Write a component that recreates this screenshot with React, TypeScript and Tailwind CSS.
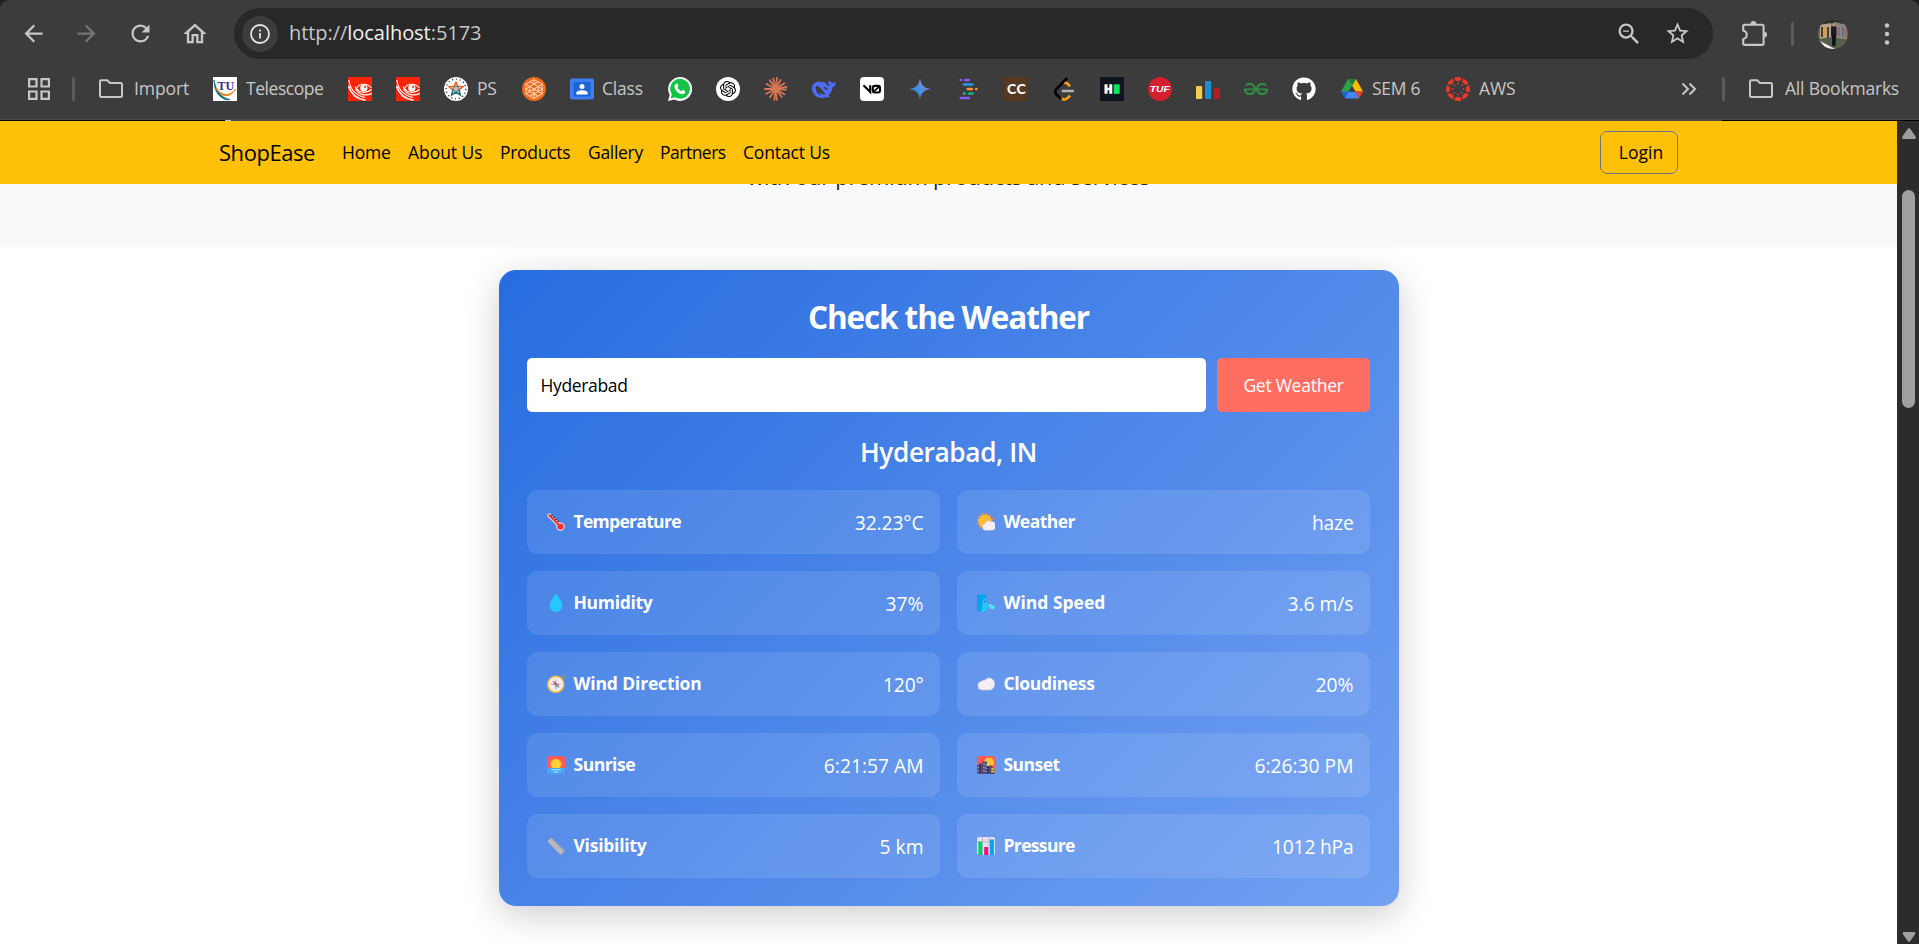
import type { ReactNode } from "react";
import { SiOpenai, SiGeeksforgeeks } from "react-icons/si";
import { FaGithub } from "react-icons/fa";
import {
  MdArrowBack,
  MdArrowForward,
  MdRefresh,
  MdOutlineHome,
  MdZoomOut,
  MdStarBorder,
} from "react-icons/md";

/* ---------- bookmark icons (24 x 24) ---------- */

function Svg({ children, box = 24 }: { children: ReactNode; box?: number }) {
  return (
    <svg viewBox={`0 0 ${box} ${box}`} className="size-6 shrink-0">
      {children}
    </svg>
  );
}

const TelescopeIcon = () => (
  <Svg>
    <rect width="24" height="24" fill="#fff" />
    <path d="M1 3 C1 14 6 21 14 23 L17 22.5 C8 21 3 14 1 3Z" fill="#0e6f86" stroke="#0e6f86" strokeWidth="0.8" />
    <path d="M3 11 C7 20 17 22 22.5 12 C18 19 9 20 3 11Z" fill="#f08020" stroke="#f08020" strokeWidth="1" />
    <text x="12.8" y="13" textAnchor="middle" className="font-['Liberation_Serif',serif]" fontSize="12" fontWeight="700" fill="#3a2f86">
      TU
    </text>
  </Svg>
);

const EyeIcon = () => (
  <Svg>
    <rect width="24" height="24" fill="#fb2406" />
    <g fill="none" stroke="#fff">
      <path d="M0.8 3 C2 12 8 18.5 17 20.5" strokeWidth="1.1" />
      <path d="M0.5 9 C3 17 9 22 17.5 23.2" strokeWidth="1.5" />
      <path d="M7.5 9.5 C8 15.5 14 20.5 24 16.5" strokeWidth="1.3" />
      <path d="M8.5 11.5 C11 6.5 18.5 5.5 23.5 11" strokeWidth="1.1" />
      <path d="M8.5 11.5 C12 16.5 19 16.5 23.5 12.5" strokeWidth="1.1" />
    </g>
    <circle cx="15.8" cy="11" r="3.6" fill="#fff" />
    <circle cx="17" cy="9.8" r="1.1" fill="#fb2406" />
  </Svg>
);

const StarSealIcon = () => (
  <Svg>
    <circle cx="12" cy="12" r="12" fill="#fff" />
    <circle cx="12" cy="12" r="9.9" fill="none" stroke="#333" strokeWidth="1.4" strokeDasharray="1.1 2.75" />
    <path d="M12 4.8 L13.7 9.3 L18.8 9.6 L15 12.8" fill="none" stroke="#e8632a" strokeWidth="1.6" />
    <path d="M12 4.8 L10.3 9.3 L5.2 9.6 L9 12.8" fill="none" stroke="#e8632a" strokeWidth="1.6" />
    <path d="M9 12.8 L7.7 18 L12 15.2 L16.3 18 L15 12.8" fill="none" stroke="#1c6f7d" strokeWidth="1.6" />
    <circle cx="12" cy="11.8" r="2.8" fill="#b9bec0" stroke="#5c6468" strokeWidth="0.9" />
  </Svg>
);

const HexIcon = () => (
  <Svg>
    <circle cx="12" cy="12" r="12" fill="#f26a1b" />
    <g fill="none" stroke="#ffe3cf" strokeWidth="0.9">
      <path d="M12 2.5 L20.2 7.25 V16.75 L12 21.5 L3.8 16.75 V7.25Z" />
      <path d="M12 7 L16.3 9.5 V14.5 L12 17 L7.7 14.5 V9.5Z" />
      <path d="M12 2.5 V7 M12 17 V21.5 M3.8 7.25 L7.7 9.5 L12 12 L16.3 14.5 L20.2 16.75 M20.2 7.25 L16.3 9.5 L12 12 L7.7 14.5 L3.8 16.75 M12 12 V17" />
      <path d="M7.9 4.9 L12 7 L16.1 4.9 M3.8 12 L7.7 9.5 M3.8 12 L7.7 14.5 M20.2 12 L16.3 9.5 M20.2 12 L16.3 14.5 M7.9 19.1 L12 17 L16.1 19.1" />
    </g>
  </Svg>
);

const ClassIcon = () => (
  <Svg>
    <rect y="1.5" width="24" height="21" rx="1.8" fill="#3f7df0" />
    <rect x="3.5" y="5" width="17" height="14.5" fill="#1a66d6" />
    <circle cx="12" cy="9.4" r="2.5" fill="#fff" />
    <path d="M6.3 17.5 V16.2 C6.3 13.9 9.5 13.2 12 13.2 S17.7 13.9 17.7 16.2 V17.5Z" fill="#fff" />
  </Svg>
);

const WhatsAppIcon = () => (
  <Svg>
    <path d="M0 24 L1.7 17.9 A12 12 0 1 1 6.2 22.4Z" fill="#fff" />
    <path d="M2.6 21.4 L3.8 17.2 A9.9 9.9 0 1 1 7.1 20.3Z" fill="#12c443" />
    <path d="M8.2 6.6 C8.7 6.3 9.3 6.4 9.5 6.9 L10.3 8.8 C10.5 9.3 9.4 10.3 9.5 10.6 C10.3 12.2 11.5 13.4 13.3 14.2 C13.7 14.3 14.5 13 14.9 13 L17.1 14 C17.6 14.3 17.3 15.6 16.7 16.3 C15.3 17.6 13.4 17.4 11.4 16.4 C9.3 15.3 7.4 13.2 6.7 11.2 C6.1 9.4 6.7 7.6 8.2 6.6Z" fill="#fff" />
  </Svg>
);

const OpenAiIcon = () => (
  <div className="flex size-6 shrink-0 items-center justify-center rounded-full bg-white text-black">
    <SiOpenai className="size-4" />
  </div>
);

const RAYS = [
  [22, 12.6], [20.6, 17.4], [17.8, 20], [12.9, 23], [10.4, 22.8], [6, 20.2], [2.2, 16.8],
  [0.8, 12], [2.6, 7], [5.8, 3.3], [9.3, 1.5], [13, 0.9], [16.6, 3], [20.3, 6.2], [22.6, 9.8],
];

const BurstIcon = () => (
  <Svg>
    <g stroke="#d97757" strokeWidth="1.8" strokeLinecap="round">
      {RAYS.map(([x, y]) => (
        <path key={`${x}-${y}`} d={`M11.5 12 L${x} ${y}`} />
      ))}
    </g>
  </Svg>
);

const WhaleIcon = () => (
  <Svg>
    <path
      d="M23.9 5.2 C22.6 5.7 21.6 5 20.7 5.9 C19 5.6 17.6 4.7 16.9 3.5 C15.6 5.2 16 7.3 17.7 8.8 C16.9 9.5 16.2 9.2 15.3 8.3 C13.5 6.7 12.3 4.6 10.8 4.3 C10.7 5 10.9 5.5 11.2 5.9 C6.5 3.3 0 5.2 0 11.5 C0 16.7 4.5 21 9.5 21 C11.5 21 13 20.5 14.2 19.7 C15.4 20.5 16.7 20.6 17.8 20 L16.3 18.2 C19.2 15.6 20.3 13 20.5 10.3 C22.4 9.7 23.7 8 23.9 5.2Z"
      fill="#4d6bfe"
    />
    <path d="M3.8 8.8 C6.8 9 9.5 11.5 12.8 16.5 C13.4 17.3 13.2 18 12.3 17.8 C10.3 17.3 9.8 16.3 8.5 15.3 C8 16.3 8.7 17.3 9.5 18.4 C5.3 17.5 3.3 13.5 3.8 8.8Z" fill="#3c3c3c" />
    <path d="M11.3 10 C13.2 9.3 15.5 10.8 15.6 13.4 C14.5 13.6 12.6 11.7 11.3 10Z" fill="#3c3c3c" />
  </Svg>
);

const VZeroIcon = () => (
  <Svg>
    <rect width="24" height="24" rx="4" fill="#fff" />
    <g fill="none" stroke="#000" strokeWidth="2.1">
      <path d="M3.5 8.2 L10.2 15 V8.2" />
      <rect x="12.8" y="8.9" width="7.2" height="6.6" rx="2" />
      <path d="M13.3 15.2 L19.8 8.9" strokeWidth="1.7" />
    </g>
  </Svg>
);

const SparkIcon = () => (
  <Svg>
    <defs>
      <linearGradient id="spark" x1="0" y1="1" x2="1" y2="0">
        <stop offset="0.2" stopColor="#2f86dc" />
        <stop offset="0.5" stopColor="#4a8ee0" />
        <stop offset="0.9" stopColor="#a884cf" />
      </linearGradient>
    </defs>
    <path d="M12 1 C12.8 8 16 11.2 23 12 C16 12.8 12.8 16 12 23 C11.2 16 8 12.8 1 12 C8 11.2 11.2 8 12 1Z" fill="url(#spark)" />
  </Svg>
);

const DashesIcon = () => (
  <Svg>
    <g strokeWidth="2.7" strokeLinecap="round">
      <path d="M4.8 3 H4.9 M9.2 3 H12.8" stroke="#8b5cf6" />
      <path d="M8 7.5 H16.4" stroke="#1e9bf0" />
      <path d="M11.8 12 H15.8 M20.3 12 H20.4" stroke="#f79a2e" />
      <path d="M8 16.5 H8.6 M13.2 16.5 H16.4" stroke="#10b981" />
      <path d="M4.8 21 H12.8" stroke="#8b5cf6" />
    </g>
  </Svg>
);

const CodeChefIcon = () => (
  <div className="flex size-6 shrink-0 items-center justify-center bg-[#573921] pl-px font-['Lato',sans-serif] text-[14px] leading-none font-black tracking-[0.5px] text-white">
    CC
  </div>
);

const LeetIcon = () => (
  <Svg>
    <g fill="none" strokeWidth="2.7" strokeLinecap="round">
      <path d="M11 6.2 C13.2 4.8 14.7 5.5 18 9.3" stroke="#f7a11b" strokeLinecap="butt" />
      <path d="M18 18.5 C14.5 23.5 11.5 23.5 8 20.5" stroke="#f7a11b" strokeLinecap="butt" />
      <path d="M14.5 1.6 L4 12.5 C2.9 14 3.2 16 4.7 17.8 L8.5 21.5" stroke="#000" />
      <path d="M10.8 14 H20.8" stroke="#b3b3b3" strokeWidth="2.5" />
    </g>
  </Svg>
);

const HackerIcon = () => (
  <Svg>
    <rect width="24" height="24" fill="#0e141e" />
    <path d="M4.5 7.3 H7.5 V10.7 H9.3 V7.3 H12.3 V16.7 H9.3 V13.3 H7.5 V16.7 H4.5Z" fill="#fff" />
    <rect x="13.7" y="7.3" width="6" height="9.6" fill="#05e85a" />
  </Svg>
);

const TufIcon = () => (
  <div className="flex size-6 shrink-0 items-center justify-center rounded-full bg-[#d41f2f]">
    <span className="scale-x-115 font-['Liberation_Sans',sans-serif] text-[9px] leading-none font-bold text-white italic">TUF</span>
  </div>
);

const BarsIcon = () => (
  <Svg>
    <rect x="0" y="9" width="6.2" height="13" rx="1" fill="#f4cb4f" />
    <rect x="9" y="4" width="6.2" height="18" rx="1" fill="#1f8ed0" />
    <rect x="17.8" y="11" width="6.2" height="11" rx="1" fill="#b41d23" />
  </Svg>
);

const DriveIcon = () => (
  <Svg>
    <path d="M8 2 H16 L12 9 L5 20.5 L1 14.5Z" fill="#2ba24c" />
    <path d="M8 2 H16 L23 14.5 H15.3Z" fill="#ffba00" />
    <path d="M8 2 H16 L12 8.9Z" fill="#188038" />
    <path d="M1 14.5 H8.7 L5 21.5Z" fill="#1967d2" />
    <path d="M5 21.5 L8.7 14.5 H15.3 L19 21.5Z" fill="#4285f4" />
    <path d="M15.3 14.5 H23 L19 21.5Z" fill="#ea4335" />
    <path d="M12 8.9 L8.7 14.5 H15.3Z" fill="#3c3c3c" />
  </Svg>
);

const CanvasIcon = () => (
  <Svg>
    {[0, 45, 90, 135, 180, 225, 270, 315].map((a) => (
      <g key={a} transform={`rotate(${a} 12 12)`} fill="#e63a2b">
        <path d="M8.4 0.6 A12 12 0 0 1 15.6 0.6 A3.6 3.6 0 0 1 8.4 0.6Z" />
        <circle cx="12" cy="6.5" r="0.9" />
      </g>
    ))}
  </Svg>
);

const FolderIcon = () => (
  <svg viewBox="0 0 24 20" className="mr-[3px] h-5 w-6 shrink-0" fill="none" stroke="#c7c7c7" strokeWidth="2" strokeLinejoin="round">
    <path d="M1 2.6 Q1 1.3 2.3 1.3 H8.3 L11 4 H21.7 Q23 4 23 5.3 V16.7 Q23 18 21.7 18 H2.3 Q1 18 1 16.7Z" />
  </svg>
);

const PuzzleIcon = () => (
  <svg viewBox="0 0 25 25" className="ml-[29px] h-[25px] w-[25px] shrink-0" fill="none" stroke="#c7c7c7" strokeWidth="2.1" strokeLinejoin="round">
    <path d="M2.4 3.7 H20 Q21.600 3.7 21.600 5.300 V22.300 Q21.600 23.900 20 23.900 H2.800 Q1.200 23.900 1.200 22.300 V18 A4.200 4.200 0 0 0 1.200 9.700 V5.300 Q1.200 3.700 2.800 3.700Z" />
    <path d="M8.500 3 A2.900 2.900 0 0 1 14.300 3Z M22.300 10.800 A2.800 2.800 0 0 1 22.300 16.400Z" fill="#c7c7c7" stroke="none" />
  </svg>
);

/* ---------- weather glyphs (18 x 18) ---------- */

function Glyph({ children }: { children: ReactNode }) {
  return (
    <svg viewBox="0 0 18 18" className="size-[18px] shrink-0">
      {children}
    </svg>
  );
}

const Thermometer = () => (
  <Glyph>
    <path d="M2.3 2.3 L12.5 12.5" stroke="#f3eef8" strokeWidth="4" strokeLinecap="round" />
    <circle cx="13.5" cy="13.6" r="4.2" fill="#f3eef8" />
    <path d="M2.3 2.3 L12.5 12.5" stroke="#f8312f" strokeWidth="2.3" strokeLinecap="round" />
    <circle cx="13.5" cy="13.6" r="3.2" fill="#f8312f" />
    <path d="M4.5 2 L12.5 9.5" stroke="#1c1c1c" strokeWidth="1.5" strokeDasharray="1.3 1.5" />
  </Glyph>
);
const Drop = () => (
  <Glyph>
    <path d="M9 0.3 C10 0.3 15.4 8 15.4 11.8 A6.4 6.2 0 0 1 2.6 11.8 C2.6 8 8 0.3 9 0.3Z" fill="#26c9fc" />
  </Glyph>
);
const Compass = () => (
  <Glyph>
    <circle cx="15.8" cy="2" r="1.5" fill="none" stroke="#d3883e" strokeWidth="1" />
    <circle cx="8.8" cy="9.3" r="7.9" fill="#f3eef8" stroke="#f9c23c" strokeWidth="1.6" />
    <path d="M8.8 4.5 V14.1 M4 9.3 H13.6" stroke="#9b9b9b" strokeWidth="1" />
    <path d="M5.2 5.5 L10.6 8.3 L8 10.7Z" fill="#e2557f" />
    <path d="M12.6 13.2 L10.6 8.3 L8 10.7Z" fill="#8f8f8f" />
  </Glyph>
);
const Sunrise = () => (
  <Glyph>
    <rect width="18" height="18" rx="2.6" fill="#f95c55" />
    <circle cx="9" cy="8.3" r="5.7" fill="#ff9a3c" />
    <circle cx="9" cy="8.3" r="4.8" fill="#ffd233" />
    <path d="M0 12 H18 V15.4 A2.6 2.6 0 0 1 15.4 18 H2.6 A2.6 2.6 0 0 1 0 15.4Z" fill="#43a5f5" />
    <path d="M4 13.7 H14 M6.5 16 H11.5" stroke="#d8f0ff" strokeWidth="0.9" />
  </Glyph>
);
const Ruler = () => (
  <Glyph>
    <path d="M0.4 4.6 L4.4 0.5 L17.8 13.7 L13.8 17.9Z" fill="#b9b9bd" />
    <path d="M4.8 1.5 L17 13.5" stroke="#998ea4" strokeWidth="1.8" strokeDasharray="0.9 1.2" />
  </Glyph>
);
const SunCloud = () => (
  <Glyph>
    <circle cx="8" cy="8.2" r="7.4" fill="none" stroke="#f8873b" strokeWidth="1.8" strokeDasharray="2.3 1.6" />
    <circle cx="8" cy="8.2" r="6.7" fill="#fcba35" />
    <path d="M7.8 17.3 A3.4 3.4 0 0 1 7.8 10.8 A4 4 0 0 1 13.8 8.7 A4.3 4.3 0 0 1 15.5 17.3Z" fill="#f3eef8" stroke="#d5cfdd" strokeWidth="0.4" />
  </Glyph>
);
const WindFace = () => (
  <Glyph>
    <path d="M0 0.5 H9.3 V5 L5.5 17.6 H1.5 A1.5 1.5 0 0 1 0 16Z" fill="#00a6ed" />
    <path d="M9.3 4.8 V9 L11 12.5 L10 13.5 C10.5 16 9.5 17 7.5 17.2 L3.5 18 C6 14 5 8 6.5 5.5Z" fill="#26c9fc" />
    <path d="M7 8 L9 7" stroke="#0b6aa0" strokeWidth="1" />
    <path d="M10.8 11.5 C12 9.5 14 9.8 14.5 11 C16.5 10.5 18 12 17.8 13.5 C17.5 15.5 15.5 15.5 14.5 14.8 C13.5 15.5 12.5 14.8 12.5 13.6Z" fill="#50e2ff" />
  </Glyph>
);
const Cloud = () => (
  <Glyph>
    <path d="M4.5 15 A4.5 4.5 0 0 1 4.3 6.2 C5.5 5.2 6.8 5.3 7.5 5.5 C9.5 2.3 14 2.2 16 4.8 C18.6 7 18.3 14 13.5 15Z" fill="#f3eef8" stroke="#c9c0d2" strokeWidth="0.7" />
  </Glyph>
);
const Cityscape = () => (
  <Glyph>
    <rect width="18" height="18" rx="2.6" fill="#f95c55" />
    <circle cx="12" cy="6.5" r="5" fill="#ffc533" />
    <path d="M0 9 H2 V7.5 H5.5 V5.5 H10 V10 H12 V9.5 H15.5 V12 H18 V15.4 A2.6 2.6 0 0 1 15.4 18 H2.6 A2.6 2.6 0 0 1 0 15.4Z" fill="#544a7d" />
    <path d="M3 8.5 V17 M11 10.5 V17" stroke="#1f1838" strokeWidth="1.3" strokeDasharray="1.5 1" />
    <path d="M7 7.5 V16 M1.2 11 V16 M9 8.5 V16" stroke="#f3d7b8" strokeWidth="0.9" strokeDasharray="1.2 2" />
    <path d="M14.3 13 H17.5 M14.3 15.5 H17.5" stroke="#ffd233" strokeWidth="1.3" />
  </Glyph>
);
const Chart = () => (
  <Glyph>
    <rect width="18" height="18" rx="2" fill="#e6dfec" />
    <path d="M5.5 0 V18 M12 0 V18 M0 5 H18" stroke="#bfb5c9" strokeWidth="1" />
    <rect x="1.3" y="4.5" width="4" height="13.5" fill="#00d26a" />
    <rect x="7.2" y="10" width="4" height="8" fill="#f70a8d" />
    <rect x="12.9" y="2.5" width="4" height="15.5" fill="#00a6ed" />
  </Glyph>
);

/* ---------- browser chrome ---------- */

function BookmarkLabel({ className = "", children }: { className?: string; children: string }) {
  return <span className={`-mt-0.5 text-[17.5px] leading-6 whitespace-nowrap text-[#c7c7c7] ${className}`}>{children}</span>;
}

function Toolbar() {
  return (
    <div className="flex h-[67px] items-center text-[#c7c7c7]">
      <div className="flex w-[234px] items-center pl-[20px]">
        <MdArrowBack className="size-[27px] shrink-0" />
        <MdArrowForward className="ml-[26px] size-[27px] shrink-0 text-[#757575]" />
        <MdRefresh className="ml-[27px] size-[27px] shrink-0" />
        <MdOutlineHome className="ml-[27px] size-[28px] shrink-0" />
      </div>
      <div className="flex h-[51px] w-[1479px] items-center rounded-full bg-[#282828] pl-2">
        <div className="flex size-9 items-center justify-center rounded-full bg-[#3c3c3c]">
          <svg viewBox="0 0 20 20" className="size-5" fill="none" stroke="#e3e3e3" strokeWidth="1.8">
            <circle cx="10" cy="10" r="9" />
            <path d="M10 9 V14.5 M10 5.4 V7.4" />
          </svg>
        </div>
        <div className="-mt-px ml-[11px] text-[20px] leading-7 tracking-[-0.05px] text-[#c7c7c7]">
          http://<span className="text-[#f1f1f1]">localhost</span>:5173
        </div>
        <MdZoomOut className="mr-[21px] ml-auto size-[28px]" />
        <MdStarBorder className="mr-[22px] size-[27px]" />
      </div>
      <PuzzleIcon />
      <div className="ml-[24px] h-6 w-[3px] rounded-full bg-[#5c5c5c]" />
      <svg viewBox="0 0 30 30" className="ml-[24px] size-[30px]">
        <defs>
          <clipPath id="avatar">
            <circle cx="15" cy="15" r="15" />
          </clipPath>
        </defs>
        <g clipPath="url(#avatar)">
          <rect width="30" height="30" fill="#6f6a5c" />
          <rect width="30" height="5" fill="#2f322c" />
          <path d="M2 6 L13 4 V20 L2 21Z" fill="#b3a68f" />
          <path d="M3 8 H5 V18 H3Z M9 8 H11 V19 H9Z" fill="#5b3c20" />
          <path d="M6 8 H8 V17 H6Z" fill="#dc9a4a" />
          <path d="M13 5 L17 3 L29 6 V20 H18Z" fill="#8a867f" />
          <path d="M20 8 H22 V18 H20Z M27 8 H29 V19 H27Z" fill="#a0675a" />
          <path d="M24 8 H26 V18 H24Z" fill="#5f6f8f" />
          <path d="M0 20 L14 18 L30 21 V30 H0Z" fill="#555f49" />
          <path d="M2 22 L17 30 H8Z" fill="#f4f4ee" />
          <rect x="13" y="7" width="5.5" height="11" rx="2" fill="#151c30" />
          <path d="M14 16 H18 L17.5 27 H14Z" fill="#10131d" />
          <circle cx="15.8" cy="6" r="1.6" fill="#c08d6e" />
        </g>
      </svg>
      <svg viewBox="0 0 6 24" className="ml-[36px] h-6 w-[6px]" fill="#c7c7c7">
        <circle cx="3" cy="3.5" r="2.2" />
        <circle cx="3" cy="12" r="2.2" />
        <circle cx="3" cy="20.5" r="2.2" />
      </svg>
    </div>
  );
}

function Bookmarks() {
  return (
    <div className="flex h-[44px] items-center">
      <svg viewBox="0 0 22 22" className="ml-[28px] size-[22px]" fill="none" stroke="#c7c7c7" strokeWidth="2.2">
        <path d="M1.1 1.1 H8.5 V8.5 H1.1Z M13.5 1.1 H20.9 V8.5 H13.5Z M1.1 13.5 H8.5 V20.9 H1.1Z M13.5 13.5 H20.9 V20.9 H13.5Z" />
      </svg>
      <div className="ml-[22px] h-6 w-[3px] rounded-full bg-[#5c5c5c]" />
      <div className="ml-[24px] flex w-[114px] items-center gap-[8px]">
        <FolderIcon />
        <BookmarkLabel className="tracking-[-0.1px]">Import</BookmarkLabel>
      </div>
      <div className="flex w-[135px] items-center gap-[9px]">
        <TelescopeIcon />
        <BookmarkLabel className="tracking-[-0.45px]">Telescope</BookmarkLabel>
      </div>
      <div className="flex w-24 gap-6">
        <EyeIcon />
        <EyeIcon />
      </div>
      <div className="flex w-[78px] items-center gap-[9px]">
        <StarSealIcon />
        <BookmarkLabel className="tracking-[-0.4px]">PS</BookmarkLabel>
      </div>
      <div className="w-12">
        <HexIcon />
      </div>
      <div className="flex w-[98px] items-center gap-[8px]">
        <ClassIcon />
        <BookmarkLabel className="tracking-[-0.2px]">Class</BookmarkLabel>
      </div>
      <div className="flex w-[672px] items-center gap-6">
        <WhatsAppIcon />
        <OpenAiIcon />
        <BurstIcon />
        <WhaleIcon />
        <VZeroIcon />
        <SparkIcon />
        <DashesIcon />
        <CodeChefIcon />
        <LeetIcon />
        <HackerIcon />
        <TufIcon />
        <BarsIcon />
        <SiGeeksforgeeks className="size-6 shrink-0 text-[#2f8d46]" />
        <FaGithub className="size-6 shrink-0 text-white" />
      </div>
      <div className="flex w-[106px] items-center gap-[8px]">
        <DriveIcon />
        <BookmarkLabel className="tracking-[-0.25px]">SEM 6</BookmarkLabel>
      </div>
      <div className="flex items-center gap-[9px]">
        <CanvasIcon />
        <BookmarkLabel className="tracking-[-0.1px]">AWS</BookmarkLabel>
      </div>
      <svg viewBox="0 0 16 14" className="mr-[25px] ml-auto h-[14px] w-4" fill="none" stroke="#c7c7c7" strokeWidth="2">
        <path d="M1.5 1.5 L7 7 L1.5 12.5 M8.5 1.5 L14 7 L8.5 12.5" />
      </svg>
      <div className="h-6 w-[3px] rounded-full bg-[#5c5c5c]" />
      <div className="mr-[19px] ml-[24px] flex w-[151px] items-center gap-[9px]">
        <FolderIcon />
        <BookmarkLabel className="tracking-[-0.2px]">All Bookmarks</BookmarkLabel>
      </div>
    </div>
  );
}

/* ---------- page ---------- */

const NAV: [string, string][] = [
  ["Home", "w-[66px] tracking-[-0.2px]"],
  ["About Us", "w-[92px] tracking-[-0.05px]"],
  ["Products", "w-[88px] tracking-[-0.3px]"],
  ["Gallery", "w-[72px] tracking-[-0.3px]"],
  ["Partners", "w-[83px] tracking-[-0.5px]"],
  ["Contact Us", "w-[90px] tracking-[-0.15px]"],
];

function Navbar() {
  return (
    <nav className="flex h-[63px] shrink-0 items-center bg-[#ffc107] pr-[219px] pl-[219px] text-black">
      <div className="w-[123px] text-[22px] tracking-[-0.45px]">ShopEase</div>
      {NAV.map(([label, cls]) => (
        <a key={label} className={`text-[17.5px] whitespace-nowrap ${cls}`}>
          {label}
        </a>
      ))}
      <button className="ml-auto h-[43px] w-[78px] rounded-[7px] border border-[#6c757d] pl-[4px] text-[17.5px]">Login</button>
    </nav>
  );
}

type Stat = { icon: ReactNode; label: string; value: string; labelCls: string; valueCls?: string };

const STATS: Stat[] = [
  { icon: <Thermometer />, label: "Temperature", value: "32.23°C", labelCls: "tracking-[-0.7px]", valueCls: "tracking-[-0.1px]" },
  { icon: <SunCloud />, label: "Weather", value: "haze", labelCls: "tracking-[-0.55px]", valueCls: "tracking-[-0.2px]" },
  { icon: <Drop />, label: "Humidity", value: "37%", labelCls: "tracking-[-0.3px]" },
  { icon: <WindFace />, label: "Wind Speed", value: "3.6 m/s", labelCls: "tracking-[0px]" },
  { icon: <Compass />, label: "Wind Direction", value: "120°", labelCls: "tracking-[-0.15px]", valueCls: "tracking-[-0.2px]" },
  { icon: <Cloud />, label: "Cloudiness", value: "20%", labelCls: "tracking-[-0.35px]" },
  { icon: <Sunrise />, label: "Sunrise", value: "6:21:57 AM", labelCls: "tracking-[-0.5px]" },
  { icon: <Cityscape />, label: "Sunset", value: "6:26:30 PM", labelCls: "tracking-[-0.55px]" },
  { icon: <Ruler />, label: "Visibility", value: "5 km", labelCls: "tracking-[-0.25px]" },
  { icon: <Chart />, label: "Pressure", value: "1012 hPa", labelCls: "tracking-[-0.65px]", valueCls: "tracking-[-0.2px]" },
];

function StatTile({ icon, label, value, labelCls, valueCls = "" }: Stat) {
  return (
    <div className="flex h-16 items-center rounded-[11px] bg-white/10 pr-[16px] pl-5">
      {icon}
      <span className={`-mt-px ml-[9px] text-[17.5px] font-bold ${labelCls}`}>{label}</span>
      <span className={`mt-0.5 ml-auto text-[19.25px] ${valueCls}`}>{value}</span>
    </div>
  );
}

function WeatherCard() {
  return (
    <section className="mx-auto mt-[23px] h-[636px] w-[900px] shrink-0 rounded-[17px] bg-linear-[135deg,#276ce0,#72a1f2] pt-[29px] pr-[29px] pl-7 text-white shadow-[0_9px_36px_rgba(0,0,0,0.2)]">
      <h2 className="h-9 pl-px text-center text-[31.5px] leading-9 font-bold tracking-[-1.1px]">Check the Weather</h2>
      <div className="mt-[23px] flex h-[54px] gap-[11px]">
        <div className="flex w-[679px] items-center rounded-[5px] bg-white pl-[14px] text-[17.5px] tracking-[-0.35px] text-black">
          Hyderabad
        </div>
        <button className="flex-1 rounded-[5px] bg-[#ff6f61] pl-px text-[17.5px] tracking-[-0.25px]">Get Weather</button>
      </div>
      <h3 className="mt-[24px] h-[33px] pl-px text-center text-[26.25px] leading-[33px] font-semibold tracking-[-0.4px]">Hyderabad, IN</h3>
      <div className="mt-[21px] grid grid-cols-2 gap-[17px]">
        {STATS.map((s) => (
          <StatTile key={s.label} {...s} />
        ))}
      </div>
    </section>
  );
}

function Scrollbar() {
  return (
    <div className="flex w-[22px] flex-col items-center bg-[#2c2c2c] text-[#9f9f9f]">
      <svg viewBox="0 0 14 11" className="mt-[7px] ml-px h-[11px] w-[14px]" fill="currentColor">
        <path d="M5.8 0.8 Q7 -0.4 8.2 0.8 L13.6 8.6 Q14.4 11 12.5 11 H1.5 Q-0.4 11 0.4 8.6Z" />
      </svg>
      <div className="mt-[51px] ml-px h-[218px] w-[13px] rounded-full bg-[#9f9f9f]" />
      <svg viewBox="0 0 14 11" className="mt-auto mb-[2px] ml-px h-[10px] w-[14px] rotate-180" fill="currentColor">
        <path d="M5.8 0.8 Q7 -0.4 8.2 0.8 L13.6 8.6 Q14.4 11 12.5 11 H1.5 Q-0.4 11 0.4 8.6Z" />
      </svg>
    </div>
  );
}

export default function App() {
  return (
    <div className="flex h-[944px] w-[1919px] flex-col overflow-hidden bg-[#1f2020] font-['Open_Sans',sans-serif]">
      <header className="h-[119px] shrink-0 rounded-t-[9px] bg-[#3c3c3c]">
        <Toolbar />
        <Bookmarks />
      </header>
      <div className="flex h-[2px] shrink-0 flex-col">
        <div className="h-px bg-[#4a4a4a]" />
        <div className="flex h-px bg-[#4a4a4a]">
          <div className="w-[225px] bg-black" />
          <div className="w-[6px] bg-[#a8c7fa]" />
          <div className="ml-auto w-[197px] bg-black" />
        </div>
      </div>
      <div className="flex min-h-0 flex-1">
        <main className="flex w-[1897px] flex-col overflow-hidden bg-white">
          <Navbar />
          <div className="h-[63px] shrink-0 overflow-hidden bg-[#f8f9fa]">
            <p className="-mt-[22px] text-center text-[21.9px] leading-[30px] tracking-[-0.28px] text-[#212529]">
              with our premium products and services
            </p>
          </div>
          <WeatherCard />
        </main>
        <Scrollbar />
      </div>
    </div>
  );
}
